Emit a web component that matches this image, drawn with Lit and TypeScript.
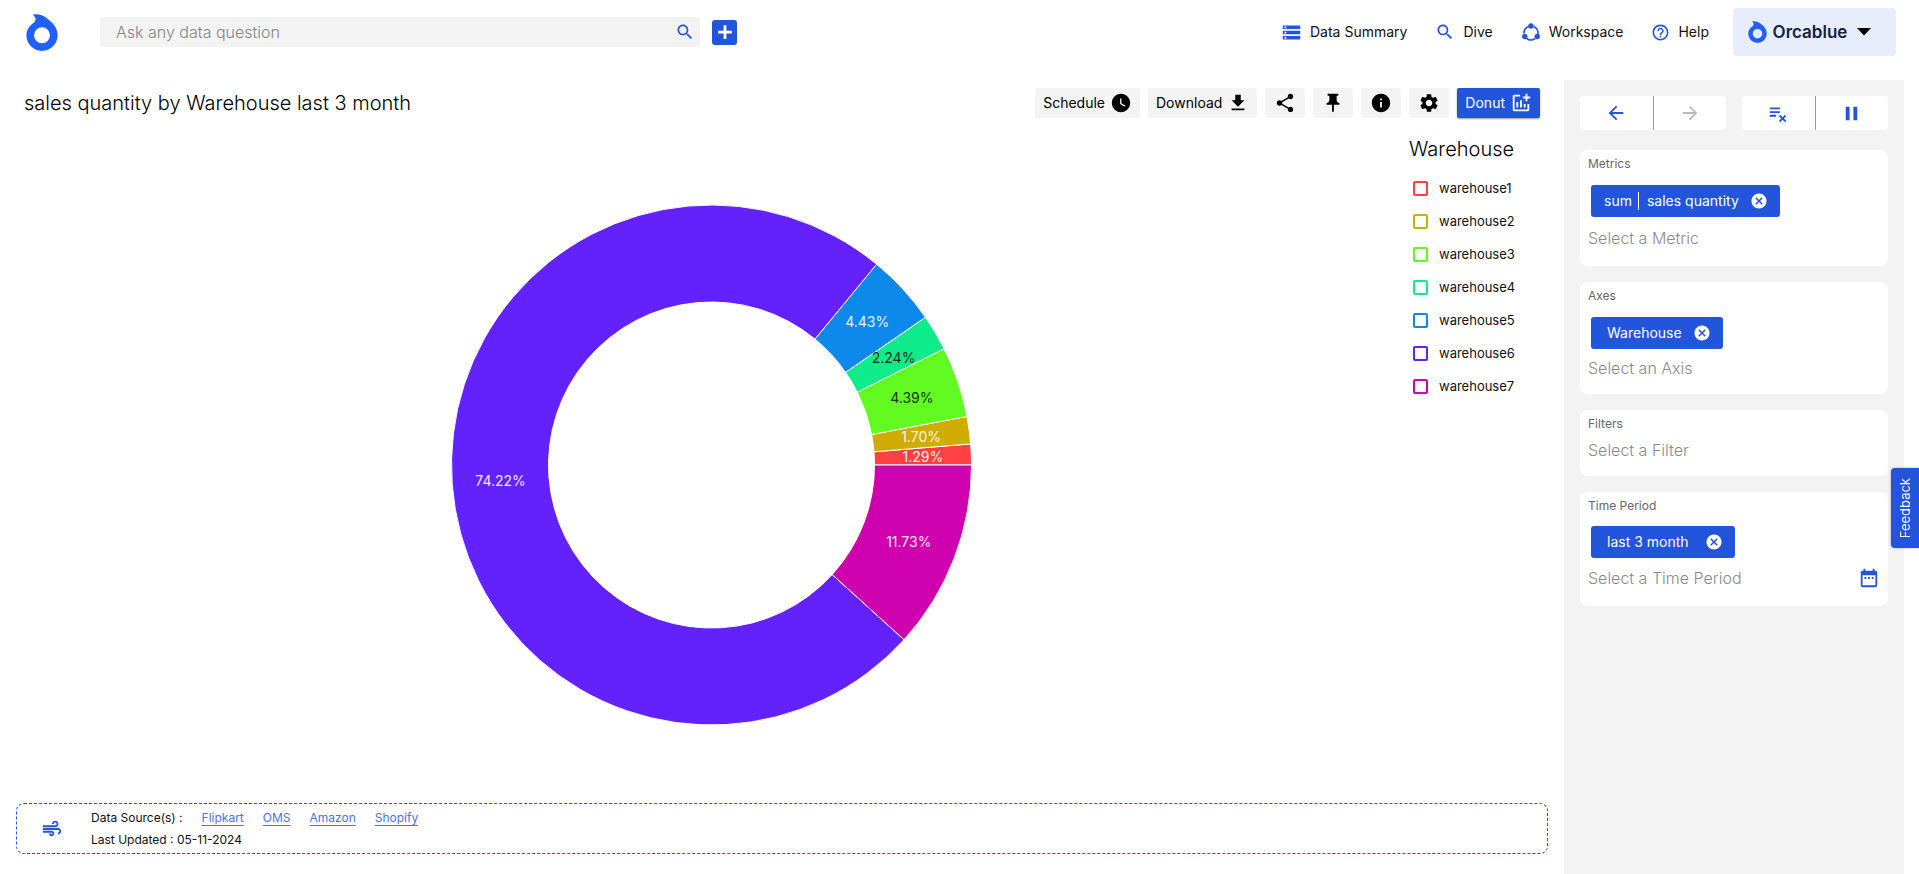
import { LitElement, html, svg, css } from "lit";
import { customElement } from "lit/decorators.js";
import { styleMap } from "lit/directives/style-map.js";

const ICONS: Record<string, string> = {
  search: "M15.5 14h-.79l-.28-.27C15.41 12.59 16 11.11 16 9.5 16 5.91 13.09 3 9.5 3S3 5.91 3 9.5 5.91 16 9.5 16c1.61 0 3.09-.59 4.23-1.57l.27.28v.79l5 4.99L20.49 19l-4.99-5zm-6 0C7.01 14 5 11.99 5 9.5S7.01 5 9.5 5 14 7.01 14 9.5 11.99 14 9.5 14z",
  storage: "M2 20h20v-4H2v4zm2-3h2v2H4v-2zM2 4v4h20V4H2zm4 3H4V5h2v2zm-4 7h20v-4H2v4zm2-3h2v2H4v-2z",
  help: "M11 18h2v-2h-2v2zm1-16C6.48 2 2 6.48 2 12s4.48 10 10 10 10-4.48 10-10S17.52 2 12 2zm0 18c-4.41 0-8-3.59-8-8s3.59-8 8-8 8 3.59 8 8-3.59 8-8 8zm0-14c-2.21 0-4 1.79-4 4h2c0-1.1.9-2 2-2s2 .9 2 2c0 2-3 1.75-3 5h2c0-2.25 3-2.5 3-5 0-2.21-1.79-4-4-4z",
  clock: "M12 2C6.5 2 2 6.5 2 12s4.5 10 10 10 10-4.5 10-10S17.5 2 12 2zm4.2 14.2L11 13V7h1.5v5.2l4.5 2.7-.8 1.3z",
  download: "M5 20h14v-2H5v2zM19 9h-4V3H9v6H5l7 7 7-7z",
  share: "M18 16.08c-.76 0-1.44.3-1.96.77L8.91 12.7c.05-.23.09-.46.09-.7s-.04-.47-.09-.7l7.05-4.11c.54.5 1.25.81 2.04.81 1.66 0 3-1.34 3-3s-1.34-3-3-3-3 1.34-3 3c0 .24.04.47.09.7L8.04 9.81C7.5 9.31 6.79 9 6 9c-1.66 0-3 1.34-3 3s1.34 3 3 3c.79 0 1.5-.31 2.04-.81l7.12 4.16c-.05.21-.08.43-.08.65 0 1.61 1.31 2.92 2.92 2.92s2.92-1.31 2.92-2.92-1.31-2.92-2.92-2.92z",
  pin: "M16 9V4h1c.55 0 1-.45 1-1s-.45-1-1-1H7c-.55 0-1 .45-1 1s.45 1 1 1h1v5c0 1.66-1.34 3-3 3v2h5.97v7l1 1 1-1v-7H19v-2c-1.66 0-3-1.34-3-3z",
  info: "M12 2C6.48 2 2 6.48 2 12s4.48 10 10 10 10-4.48 10-10S17.52 2 12 2zm1 15h-2v-6h2v6zm0-8h-2V7h2v2z",
  settings: "M19.14 12.94c.04-.3.06-.61.06-.94 0-.32-.02-.64-.07-.94l2.03-1.58c.18-.14.23-.41.12-.61l-1.92-3.32c-.12-.22-.37-.29-.59-.22l-2.39.96c-.5-.38-1.03-.7-1.62-.94l-.36-2.54c-.04-.24-.24-.41-.48-.41h-3.84c-.24 0-.43.17-.47.41l-.36 2.54c-.59.24-1.13.57-1.62.94l-2.39-.96c-.22-.08-.47 0-.59.22L2.74 8.87c-.12.21-.08.47.12.61l2.03 1.58c-.05.3-.09.63-.09.94s.02.64.07.94l-2.03 1.58c-.18.14-.23.41-.12.61l1.92 3.32c.12.22.37.29.59.22l2.39-.96c.5.38 1.03.7 1.62.94l.36 2.54c.05.24.24.41.48.41h3.84c.24 0 .44-.17.47-.41l.36-2.54c.59-.24 1.13-.56 1.62-.94l2.39.96c.22.08.47 0 .59-.22l1.92-3.32c.12-.22.07-.47-.12-.61l-2.01-1.58zM12 15.6c-1.98 0-3.6-1.62-3.6-3.6s1.62-3.6 3.6-3.6 3.6 1.62 3.6 3.6-1.62 3.6-3.6 3.6z",
  addchart: "M22 5v2h-3v3h-2V7h-3V5h3V2h2v3h3zm-3 14H5V5h6V3H5c-1.1 0-2 .9-2 2v14c0 1.1.9 2 2 2h14c1.1 0 2-.9 2-2v-6h-2v6zm-4-6v4h2v-4h-2zm-4 4h2V9h-2v8zm-2 0v-6H7v6h2z",
  back: "M20 11H7.83l5.59-5.59L12 4l-8 8 8 8 1.41-1.41L7.83 13H20v-2z",
  forward: "M12 4l-1.41 1.41L16.17 11H4v2h12.17l-5.58 5.59L12 20l8-8z",
  clear: "M14 10H3v2h11v-2zm0-4H3v2h11V6zM3 16h7v-2H3v2zm11.41 6L17 19.41 19.59 22 21 20.59 18.41 18 21 15.41 19.59 14 17 16.59 14.41 14 13 15.41 15.59 18 13 20.59 14.41 22z",
  pause: "M6 19h4V5H6v14zm8-14v14h4V5h-4z",
  cancel: "M12 2C6.47 2 2 6.47 2 12s4.47 10 10 10 10-4.47 10-10S17.53 2 12 2zm5 13.59L15.59 17 12 13.41 8.41 17 7 15.59 10.59 12 7 8.41 8.41 7 12 10.59 15.59 7 17 8.41 13.41 12 17 15.59z",
  air: "M14.5 17c0 1.65-1.35 3-3 3s-3-1.35-3-3h2c0 .55.45 1 1 1s1-.45 1-1-.45-1-1-1H2v-2h9.5c1.65 0 3 1.35 3 3zM19 6.5C19 4.57 17.43 3 15.5 3S12 4.57 12 6.5h2c0-.83.67-1.5 1.5-1.5s1.5.67 1.5 1.5S16.33 8 15.5 8H2v2h13.5c1.93 0 3.5-1.57 3.5-3.5zm-.5 4.5H2v2h16.5c.83 0 1.5.67 1.5 1.5s-.67 1.5-1.5 1.5v2c1.93 0 3.5-1.57 3.5-3.5S20.43 11 18.5 11z",
  calendar: "M9 11H7v2h2v-2zm4 0h-2v2h2v-2zm4 0h-2v2h2v-2zm2-7h-1V2h-2v2H8V2H6v2H5c-1.11 0-1.99.9-1.99 2L3 20c0 1.1.89 2 2 2h14c1.1 0 2-.9 2-2V6c0-1.1-.9-2-2-2zm0 16H5V9h14v11z",
  plus: "M13.500 4.500v6h6v3h-6v6h-3v-6h-6v-3h6v-6z",
};

const icon = (name: string, size = 20) =>
  html`<svg width=${size} height=${size} viewBox="0 0 24 24" fill="currentColor" aria-hidden="true"><path d=${ICONS[name]}></path></svg>`;

const workspaceIcon = html`<svg width="20" height="20" viewBox="0 0 20 20" fill="currentColor" aria-hidden="true">
  <circle cx="10" cy="11" r="7" fill="none" stroke="currentColor" stroke-width="1.700" stroke-dasharray="9.600 5.060" stroke-dashoffset="-1.500" transform="rotate(-78 10 11)"></circle>
  <circle cx="10" cy="4" r="2.700"></circle><circle cx="3.800" cy="14.500" r="2.700"></circle><circle cx="16.200" cy="14.500" r="2.700"></circle>
</svg>`;

const orcaLogo = (w: number, h: number) => html`<svg width=${w} height=${h} viewBox="0 0 32 37" fill="#215fff" aria-hidden="true">
  <path fill-rule="evenodd" d="M6.500 .8C12 -.6 18 1.600 22 5.200C27 9 31.600 14 31.600 21.300A15.600 15.600 0 0 1 .4 21.300C.4 16 3.400 11.800 8 8.500C10.500 6 10 3 6.500 .8zM16 13.300a8 8 0 1 0 0 16a8 8 0 0 0 0-16z"></path>
</svg>`;

interface Slice { name: string; share: number; color: string; dark?: boolean }

const SLICES: Slice[] = [
  { name: "warehouse1", share: 1.29, color: "#ff4141" },
  { name: "warehouse2", share: 1.7, color: "#cfac00" },
  { name: "warehouse3", share: 4.39, color: "#62fb21", dark: true },
  { name: "warehouse4", share: 2.24, color: "#0deb8a", dark: true },
  { name: "warehouse5", share: 4.43, color: "#0d89ec" },
  { name: "warehouse6", share: 74.22, color: "#6321fb" },
  { name: "warehouse7", share: 11.73, color: "#cf00ae" },
];

@customElement("donut-chart")
export class DonutChart extends LitElement {
  static styles = css`
    :host { display: flex; flex-direction: column; min-width: 0; }
    .chart { flex: 1 1 0; width: 100%; height: 0; min-height: 0; }
    .slice { stroke: #fff; stroke-width: 1px; }
    .label { font: 14px Inter, sans-serif; fill: #fff; text-anchor: middle; dominant-baseline: central; opacity: 0.9; }
    .label-dark { fill: #000; opacity: 0.8; }
  `;

  render() {
    const outer = 260, inner = 163, mid = (outer + inner) / 2;
    const at = (r: number, a: number) => `${(r * Math.cos(a)).toFixed(2)} ${(-r * Math.sin(a)).toFixed(2)}`;
    let start = 0;
    const arcs = SLICES.map((s) => {
      const a = start, b = start + (s.share / 100) * Math.PI * 2;
      start = b;
      const large = b - a > Math.PI ? 1 : 0;
      return {
        ...s,
        m: (a + b) / 2,
        d: `M${at(outer, a)}A${outer} ${outer} 0 ${large} 0 ${at(outer, b)}L${at(inner, b)}A${inner} ${inner} 0 ${large} 1 ${at(inner, a)}Z`,
      };
    });
    return html`<svg class="chart" viewBox="-339 -339 677 677" role="img" aria-label="Sales quantity share by warehouse">
      ${arcs.map((s) => svg`<path class="slice" d=${s.d} fill=${s.color}></path>`)}
      ${arcs.map((s) => svg`<text class=${s.dark ? "label label-dark" : "label"} x=${mid * Math.cos(s.m)} y=${-mid * Math.sin(s.m)}>${s.share.toFixed(2)}%</text>`)}
    </svg>`;
  }
}

@customElement("app-root")
export class AppRoot extends LitElement {
  static styles = css`
    :host {
      --blue: #2254dc;
      --grey: #f3f3f3;
      display: flex;
      flex-direction: column;
      min-height: 100vh;
      background: #fff;
      color: #111;
      font: 14px/20px Inter, "Open Sans", sans-serif;
    }
    * { box-sizing: border-box; }
    svg { flex: none; display: block; }
    button, input { font: inherit; color: inherit; margin: 0; border: 0; padding: 0; background: none; }
    button { display: flex; align-items: center; justify-content: center; cursor: pointer; }
    a { color: inherit; text-decoration: none; }
    h1, h2, p { margin: 0; font-weight: 400; }

    .topbar { display: flex; align-items: center; height: 64px; padding: 0 23px 0 26px; }
    .brand { margin-right: 42px; }
    .search { display: flex; align-items: center; flex: 0 1 600px; height: 30px; padding: 0 5px 0 16px; border-radius: 4px; background: var(--grey); }
    .search-input { flex: 1; min-width: 0; outline: 0; font-size: 16px; font-weight: 300; }
    .search-input::placeholder { color: #858585; opacity: 1; }
    .icon-btn { color: var(--blue); }
    .add { width: 25px; height: 25px; margin-left: 12px; border-radius: 3px; color: #fff; background: var(--blue); }
    .nav { display: flex; align-items: center; gap: 28px; margin-left: auto; margin-right: 24px; }
    .nav-link { display: flex; align-items: center; gap: 8px; font-size: 14px; }
    .nav-link svg { color: var(--blue); }
    .account { gap: 6px; width: 163px; height: 48px; padding-right: 10px; border-radius: 4px; background: #e7edfb; color: #14233f; font: 600 17px/24px Inter, sans-serif; }
    .caret { margin-left: 4px; color: #000; }

    .body { display: flex; flex: 1; gap: 16px; padding: 16px 15px 0 16px; }
    .main { display: flex; flex: 1; flex-direction: column; min-width: 0; padding: 8px 0 20px; }
    .titlebar { display: flex; align-items: center; justify-content: space-between; padding: 0 8px; }
    .title { font-size: 20px; font-weight: 300; line-height: 30px; color: #000; }
    .tools { display: flex; gap: 8px; }
    .tool { gap: 5px; min-width: 40px; height: 30px; padding: 0 8px; border-radius: 2px; background: #f4f4f4; color: #000; font-size: 14px; }
    .tool-primary { color: #fff; background: var(--blue); box-shadow: 0 1px 2px rgba(0, 0, 0, 0.4); }

    .report { display: flex; flex: 1; min-height: 520px; padding-top: 8px; }
    .donut { flex: 1; }
    .legend { width: 142px; padding: 8px 0 0 3px; }
    .legend-title { margin-bottom: 14px; font-size: 20px; font-weight: 300; line-height: 30px; color: #000; }
    .legend-list { display: grid; gap: 13px; margin: 0; padding: 0 0 0 4px; list-style: none; }
    .legend-item { display: flex; align-items: center; gap: 11px; font-size: 13px; }
    .swatch { appearance: none; width: 15px; height: 15px; border: 2px solid; border-radius: 2px; }

    .sources { display: flex; align-items: center; gap: 28px; padding: 3px 24px 2px; border: 1px dashed var(--blue); border-radius: 8px; color: var(--blue); }
    .sources-text { display: grid; font-size: 12px; line-height: 22px; color: #111; }
    .source-row { display: flex; gap: 19px; }
    .source-row a { color: #4a72e2; text-decoration: underline; text-underline-offset: 3px; }

    .panel { display: flex; flex: 0 0 340px; flex-direction: column; gap: 16px; padding: 16px; background: var(--grey); }
    .controls { display: flex; gap: 16px; margin-bottom: 4px; }
    .pair { display: flex; flex: 1; border-radius: 4px; background: #fff; color: var(--blue); }
    .pair-btn { flex: 1; height: 34px; }
    .pair-btn + .pair-btn { border-left: 1px solid #7d9dee; }
    .pair-btn:disabled { color: #bbb; cursor: default; }
    .card { display: flex; flex-direction: column; align-items: flex-start; padding: 4px 8px 12px; border-radius: 8px; background: #fff; }
    .card-label { font-size: 12px; line-height: 20px; color: #666; }
    .chip { display: flex; align-items: center; height: 32px; margin: 11px 0 5px 3px; padding: 0 12px 0 16px; border-radius: 3px; background: var(--blue); color: #fff; font-size: 14px; }
    .chip-prefix { margin-right: 8px; padding-right: 6px; border-right: 1px solid #fff; line-height: 18px; }
    .chip-close { margin-left: 11px; color: #fff; }
    .field { display: flex; align-items: center; align-self: stretch; height: 28px; }
    .field-input { flex: 1; min-width: 0; outline: 0; font-size: 16px; font-weight: 300; }
    .field-input::placeholder { color: #8a8a8a; opacity: 1; }
    .card-metrics { padding-bottom: 14px; }
    .card-metrics .chip { margin-bottom: 7px; padding-left: 13px; }
    .card-filters .field { margin-top: 2px; }
    .card-period { padding-bottom: 14px; }
    .card-period .chip { margin-top: 10px; margin-bottom: 6px; }
    .card-period .chip-close { margin-left: 16px; }

    .feedback { position: fixed; right: 0; top: 468px; width: 28px; height: 80px; border-radius: 4px 0 0 4px; background: var(--blue); color: #fff; font-size: 13px; line-height: 28px; box-shadow: 0 0 3px rgba(0, 0, 0, 0.3); }
    .feedback-text { writing-mode: vertical-rl; rotate: 180deg; }
  `;

  private card(id: string, label: string, chip: { prefix?: string; text: string } | null, placeholder: string, calendar = false) {
    return html`<section class="card card-${id}">
      <label class="card-label" for=${id}>${label}</label>
      ${chip
        ? html`<div class="chip">
            ${chip.prefix ? html`<span class="chip-prefix">${chip.prefix}</span>` : ""}
            <span>${chip.text}</span>
            <button class="chip-close" aria-label="Remove ${chip.text}">${icon("cancel", 18)}</button>
          </div>`
        : ""}
      <div class="field">
        <input class="field-input" id=${id} type="text" placeholder=${placeholder} />
        ${calendar ? html`<button class="icon-btn" aria-label="Open calendar">${icon("calendar", 22)}</button>` : ""}
      </div>
    </section>`;
  }

  render() {
    return html`
      <header class="topbar">
        <a class="brand" href="#" aria-label="Home">${orcaLogo(32, 37)}</a>
        <form class="search" role="search">
          <input class="search-input" type="text" aria-label="Ask any data question" placeholder="Ask any data question" />
          <button class="icon-btn" type="button" aria-label="Search">${icon("search", 20)}</button>
        </form>
        <button class="add" aria-label="Add">${icon("plus", 22)}</button>
        <nav class="nav">
          <a class="nav-link" href="#">${icon("storage", 21)}Data Summary</a>
          <a class="nav-link" href="#">${icon("search", 20)}Dive</a>
          <a class="nav-link" href="#">${workspaceIcon}Workspace</a>
          <a class="nav-link" href="#">${icon("help", 19)}Help</a>
        </nav>
        <button class="account">
          ${orcaLogo(19, 22)}<span>Orcablue</span>
          <svg class="caret" width="14" height="8" viewBox="0 0 14 8" fill="currentColor" aria-hidden="true"><path d="M0 0h14L7 7.500z"></path></svg>
        </button>
      </header>

      <div class="body">
        <main class="main">
          <div class="titlebar">
            <h1 class="title">sales quantity by Warehouse last 3 month</h1>
            <div class="tools">
              <button class="tool">Schedule ${icon("clock", 22)}</button>
              <button class="tool">Download ${icon("download", 22)}</button>
              <button class="tool" aria-label="Share">${icon("share", 22)}</button>
              <button class="tool" aria-label="Pin">${icon("pin", 22)}</button>
              <button class="tool" aria-label="Info">${icon("info", 22)}</button>
              <button class="tool" aria-label="Settings">${icon("settings", 22)}</button>
              <button class="tool tool-primary">Donut ${icon("addchart", 22)}</button>
            </div>
          </div>
          <div class="report">
            <donut-chart class="donut"></donut-chart>
            <aside class="legend">
              <h2 class="legend-title">Warehouse</h2>
              <ul class="legend-list">
                ${SLICES.map((s) => html`<li>
                  <label class="legend-item"><input class="swatch" type="checkbox" style=${styleMap({ borderColor: s.color })} />${s.name}</label>
                </li>`)}
              </ul>
            </aside>
          </div>
          <footer class="sources">
            ${icon("air", 22)}
            <div class="sources-text">
              <p class="source-row">
                <span>Data Source(s) :</span>
                ${["Flipkart", "OMS", "Amazon", "Shopify"].map((s) => html`<a href="#">${s}</a>`)}
              </p>
              <p>Last Updated : 05-11-2024</p>
            </div>
          </footer>
        </main>

        <aside class="panel">
          <div class="controls">
            <div class="pair">
              <button class="pair-btn" aria-label="Back">${icon("back", 22)}</button>
              <button class="pair-btn" aria-label="Forward" disabled>${icon("forward", 22)}</button>
            </div>
            <div class="pair">
              <button class="pair-btn" aria-label="Clear all">${icon("clear", 22)}</button>
              <button class="pair-btn" aria-label="Pause">${icon("pause", 23)}</button>
            </div>
          </div>
          ${this.card("metrics", "Metrics", { prefix: "sum", text: "sales quantity" }, "Select a Metric")}
          ${this.card("axes", "Axes", { text: "Warehouse" }, "Select an Axis")}
          ${this.card("filters", "Filters", null, "Select a Filter")}
          ${this.card("period", "Time Period", { text: "last 3 month" }, "Select a Time Period", true)}
        </aside>
      </div>
      <button class="feedback"><span class="feedback-text">Feedback</span></button>
    `;
  }
}
